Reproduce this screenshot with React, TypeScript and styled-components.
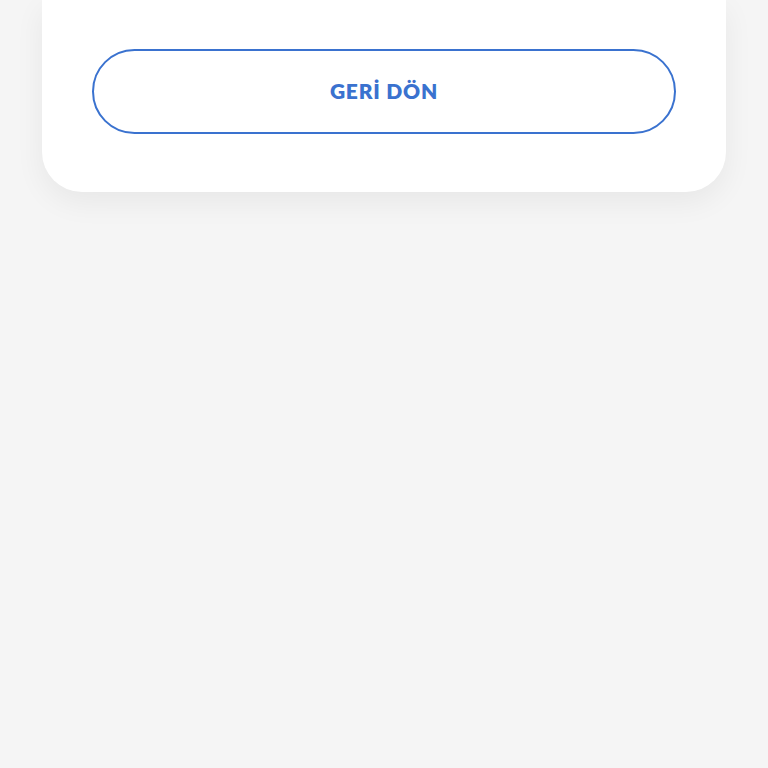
import styled, { createGlobalStyle } from 'styled-components'

const Global = createGlobalStyle`
  html, body {
    margin: 0;
    background: #f5f5f5;
    font-family: Lato, "Open Sans", sans-serif;
  }
`

const Page = styled.div`
  min-height: 768px;
  padding: 0 42px;
  box-sizing: border-box;
`

const Card = styled.div`
  background: #ffffff;
  border-radius: 0 0 40px 40px;
  padding: 49px 50px 58px;
  box-shadow: 0 10px 30px rgba(0, 0, 0, 0.06);
`

const OutlineButton = styled.button`
  display: flex;
  align-items: center;
  justify-content: center;
  box-sizing: border-box;
  width: 100%;
  height: 85px;
  padding: 0 0 2px;
  border: 2px solid #3a72cf;
  border-radius: 43px;
  background: transparent;
  color: #3a72cf;
  font-family: Lato, sans-serif;
  font-weight: 800;
  font-size: 21px;
  letter-spacing: 0.8px;
  cursor: pointer;
`

export default function App() {
  return (
    <Page>
      <Global />
      <Card>
        <OutlineButton>GERİ DÖN</OutlineButton>
      </Card>
    </Page>
  )
}
